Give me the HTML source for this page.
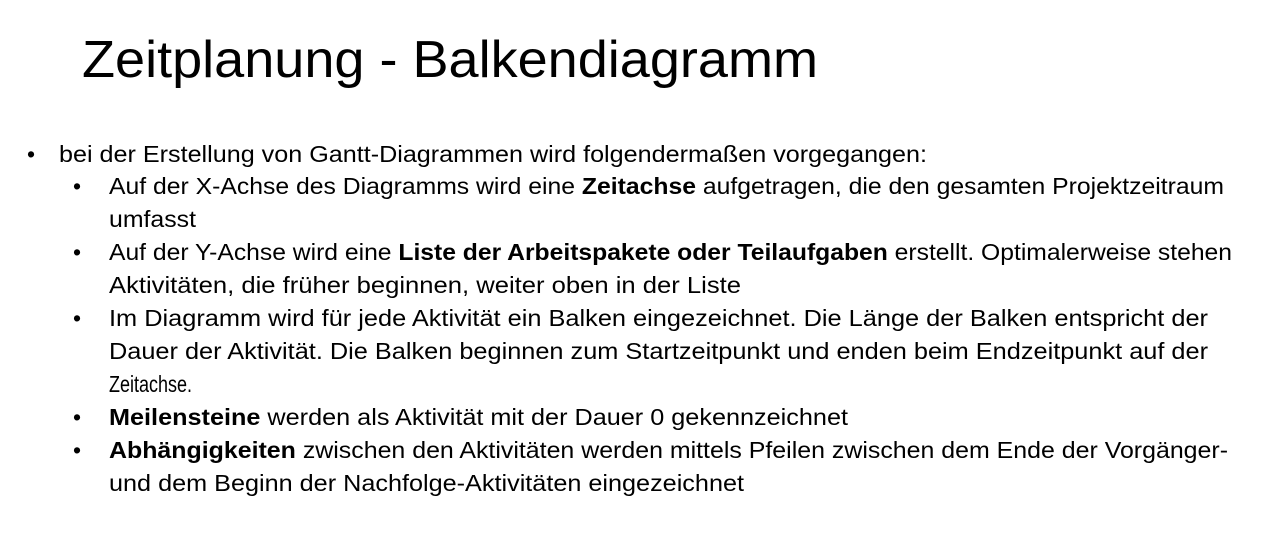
<!DOCTYPE html>
<html><head><meta charset="utf-8"><style>
html,body{margin:0;padding:0;background:#fff;width:1283px;height:547px;overflow:hidden}
svg{display:block}
text{font-family:"Liberation Sans",sans-serif;fill:#000}
.b{font-weight:bold}
</style></head><body>
<svg width="1283" height="547" viewBox="0 0 1283 547">
<text x="82" y="77" font-size="52" textLength="736" lengthAdjust="spacingAndGlyphs">Zeitplanung - Balkendiagramm</text>
<g font-size="23">
<text x="27" y="162">•</text>
<text x="59" y="162" textLength="868" lengthAdjust="spacingAndGlyphs">bei der Erstellung von Gantt-Diagrammen wird folgendermaßen vorgegangen:</text>
<text x="73" y="194">•</text>
<text x="109" y="194" textLength="1115" lengthAdjust="spacingAndGlyphs">Auf der X-Achse des Diagramms wird eine <tspan class="b">Zeitachse</tspan> aufgetragen, die den gesamten Projektzeitraum</text>
<text x="109" y="227" textLength="87" lengthAdjust="spacingAndGlyphs">umfasst</text>
<text x="73" y="260">•</text>
<text x="109" y="260" textLength="1123" lengthAdjust="spacingAndGlyphs">Auf der Y-Achse wird eine <tspan class="b">Liste der Arbeitspakete oder Teilaufgaben</tspan> erstellt. Optimalerweise stehen</text>
<text x="109" y="293" textLength="632" lengthAdjust="spacingAndGlyphs">Aktivitäten, die früher beginnen, weiter oben in der Liste</text>
<text x="73" y="326">•</text>
<text x="109" y="326" textLength="1099" lengthAdjust="spacingAndGlyphs">Im Diagramm wird für jede Aktivität ein Balken eingezeichnet. Die Länge der Balken entspricht der</text>
<text x="109" y="359" textLength="1099" lengthAdjust="spacingAndGlyphs">Dauer der Aktivität. Die Balken beginnen zum Startzeitpunkt und enden beim Endzeitpunkt auf der</text>
<text x="109" y="392" textLength="83" lengthAdjust="spacingAndGlyphs">Zeitachse.</text>
<text x="73" y="425">•</text>
<text x="109" y="425" textLength="739" lengthAdjust="spacingAndGlyphs"><tspan class="b">Meilensteine</tspan> werden als Aktivität mit der Dauer 0 gekennzeichnet</text>
<text x="73" y="458">•</text>
<text x="109" y="458" textLength="1119" lengthAdjust="spacingAndGlyphs"><tspan class="b">Abhängigkeiten</tspan> zwischen den Aktivitäten werden mittels Pfeilen zwischen dem Ende der Vorgänger-</text>
<text x="109" y="491" textLength="635" lengthAdjust="spacingAndGlyphs">und dem Beginn der Nachfolge-Aktivitäten eingezeichnet</text>
</g>
</svg>
</body></html>
